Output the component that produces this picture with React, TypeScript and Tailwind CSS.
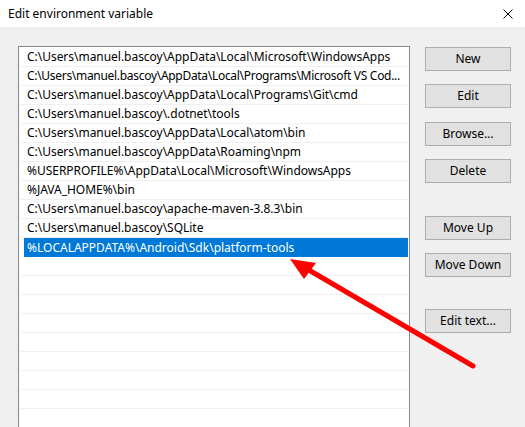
import React from "react";

const rows = [
  "C:\\Users\\manuel.bascoy\\AppData\\Local\\Microsoft\\WindowsApps",
  "C:\\Users\\manuel.bascoy\\AppData\\Local\\Programs\\Microsoft VS Cod...",
  "C:\\Users\\manuel.bascoy\\AppData\\Local\\Programs\\Git\\cmd",
  "C:\\Users\\manuel.bascoy\\.dotnet\\tools",
  "C:\\Users\\manuel.bascoy\\AppData\\Local\\atom\\bin",
  "C:\\Users\\manuel.bascoy\\AppData\\Roaming\\npm",
  "%USERPROFILE%\\AppData\\Local\\Microsoft\\WindowsApps",
  "%JAVA_HOME%\\bin",
  "C:\\Users\\manuel.bascoy\\apache-maven-3.8.3\\bin",
  "C:\\Users\\manuel.bascoy\\SQLite",
];
const selected = "%LOCALAPPDATA%\\Android\\Sdk\\platform-tools";

function Btn({ label, mt }: { label: string; mt: string }) {
  return (
    <div
      className={`${mt} w-[86px] h-[24px] bg-[#e1e1e1] border border-[#adadad] flex items-center justify-center text-[12px] text-black`}
    >
      {label}
    </div>
  );
}

export default function App() {
  const empty = Array.from({ length: 10 });
  return (
    <div
      className="relative w-[525px] h-[427px] overflow-hidden bg-[#f0f0f0] text-black"
      style={{ fontFamily: '"Noto Sans", "Segoe UI", sans-serif' }}
    >
      <div className="h-[27px] bg-white flex items-center justify-between pl-[8px] pr-[12px]">
        <span className="text-[12px] leading-none">Edit environment variable</span>
        <svg width="10" height="10" viewBox="0 0 10 10">
          <path d="M0.5 0.5 L9.5 9.5 M9.5 0.5 L0.5 9.5" stroke="#000" strokeWidth="1" />
        </svg>
      </div>
      <div className="flex">
        <div className="ml-[18px] mt-[19px] w-[392px] h-[400px] bg-white border-l border-t border-r border-[#828790] pt-[1px] px-[1px]">
          {rows.map((r, i) => (
            <div
              key={r}
              className={`h-[19px] border-b border-[#f0f0f0] flex items-center pl-[7px] text-[12px] whitespace-nowrap overflow-hidden ${
                i === 1 ? "tracking-[-0.3px]" : "tracking-[-0.03px]"
              }`}
            >
              {r}
            </div>
          ))}
          <div className="h-[19px] pl-[4px]">
            <div className="h-[19px] bg-[#0078d7] text-white flex items-center pl-[3px] text-[12px] whitespace-nowrap">
              {selected}
            </div>
          </div>
          {empty.map((_, i) => (
            <div key={i} className="h-[19px] border-b border-[#f0f0f0]" />
          ))}
        </div>
        <div className="ml-[15px] flex flex-col">
          <Btn label="New" mt="mt-[20px]" />
          <Btn label="Edit" mt="mt-[13px]" />
          <Btn label="Browse..." mt="mt-[14px]" />
          <Btn label="Delete" mt="mt-[13px]" />
          <Btn label="Move Up" mt="mt-[33px]" />
          <Btn label="Move Down" mt="mt-[13px]" />
          <Btn label="Edit text..." mt="mt-[32px]" />
        </div>
      </div>
      <svg className="absolute left-0 top-0 pointer-events-none" width="525" height="427">
        <line x1="473" y1="366" x2="302" y2="266" stroke="#ff0000" strokeWidth="5" strokeLinecap="round" />
        <polygon points="290,259 316,263 304,279" fill="#ff0000" />
      </svg>
    </div>
  );
}
